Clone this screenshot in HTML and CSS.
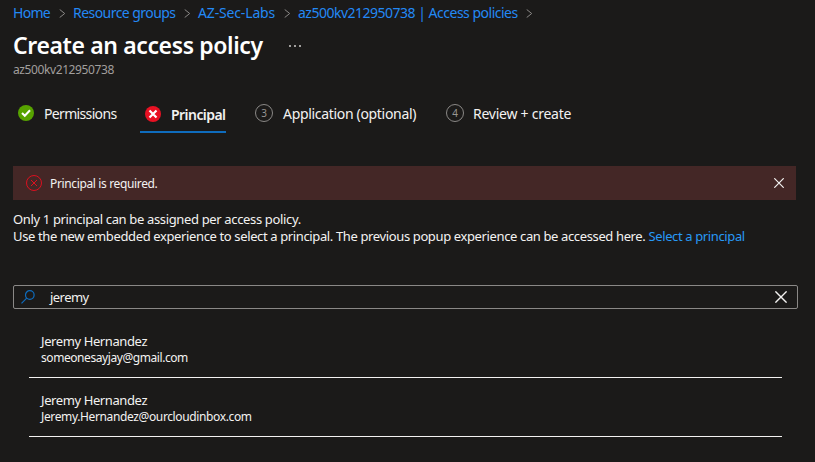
FILE: index.html
```html
<!DOCTYPE html>
<html lang="en">
<head>
<meta charset="utf-8">
<title>Create an access policy</title>
<link rel="stylesheet" href="styles.css">
</head>
<body>
<nav class="breadcrumb">
  <a class="crumb-home">Home</a><svg class="chev" viewBox="0 0 7 9"><path d="M.7.5 5.7 4.5.7 8.5"/></svg>
  <a class="crumb-groups">Resource groups</a><svg class="chev" viewBox="0 0 7 9"><path d="M.7.5 5.7 4.5.7 8.5"/></svg>
  <a class="crumb-lab">AZ-Sec-Labs</a><svg class="chev" viewBox="0 0 7 9"><path d="M.7.5 5.7 4.5.7 8.5"/></svg>
  <a class="crumb-vault">az500kv212950738 | Access policies</a><svg class="chev" viewBox="0 0 7 9"><path d="M.7.5 5.7 4.5.7 8.5"/></svg>
</nav>
<header class="header">
  <div class="title-row">
    <h1>Create an access policy</h1>
    <svg class="more" viewBox="0 0 12 2"><path d="M0 0h2v2H0zM5 0h2v2H5zM10 0h2v2h-2z"/></svg>
  </div>
  <p class="subtitle">az500kv212950738</p>
</header>
<div class="tabs">
  <div class="tab tab-permissions">
    <svg class="status" viewBox="0 0 16 16"><circle cx="8" cy="8" r="8" fill="#57a300"/><path d="m4 8 2.8 2.8L12 5.3" fill="none" stroke="#fff" stroke-width="2"/></svg>
    <span>Permissions</span>
  </div>
  <div class="tab tab-principal">
    <svg class="status" viewBox="0 0 16 16"><circle cx="8" cy="8" r="8" fill="#e81123"/><path d="m4.5 4.5 7 7m0-7-7 7" fill="none" stroke="#fff" stroke-width="2.2"/></svg>
    <span>Principal</span>
  </div>
  <div class="tab tab-application"><span class="step">3</span><span>Application (optional)</span></div>
  <div class="tab tab-review"><span class="step">4</span><span>Review + create</span></div>
</div>
<main>
  <div class="alert">
    <svg class="alert-icon" viewBox="0 0 16 16"><circle cx="8" cy="8" r="7.5"/><path d="m5 5 6 6m0-6-6 6"/></svg>
    <span class="alert-text">Principal is required.</span>
    <svg class="dismiss" viewBox="0 0 10 10"><path d="m.3.3 9.4 9.4m0-9.4L.3 9.7"/></svg>
  </div>
  <div class="info">
    <p class="info-first">Only 1 principal can be assigned per access policy.</p>
    <p class="info-second">Use the new embedded experience to select a principal. The previous popup experience can be accessed here. <a>Select a principal</a></p>
  </div>
  <div class="search">
    <svg class="search-icon" viewBox="0 0 14 14"><circle cx="8.8" cy="5" r="4.3"/><path d="M5.7 8.1.5 13.3"/></svg>
    <span class="query">jeremy</span>
    <svg class="clear" viewBox="0 0 12 12"><path d="m.4.4 11.2 11.2m0-11.2L.4 11.6"/></svg>
  </div>
  <ul class="results">
    <li><span class="name">Jeremy Hernandez</span><span class="mail mail-first">someonesayjay@gmail.com</span></li>
    <li><span class="name">Jeremy Hernandez</span><span class="mail mail-second">Jeremy.Hernandez@ourcloudinbox.com</span></li>
  </ul>
</main>
</body>
</html>
```
FILE: styles.css
```css
* { box-sizing: border-box; }
body {
  margin: 0;
  height: 462px;
  padding-left: 13px;
  overflow: hidden;
  background: #1b1a19;
  color: #f3f2f1;
  font: 13px/17px "Segoe UI", "Noto Sans", sans-serif;
  white-space: nowrap;
}
h1, p, ul { margin: 0; padding: 0; }
svg { flex: none; display: block; }
a { color: #2899f5; }

.breadcrumb { display: flex; align-items: center; height: 25px; }
.breadcrumb a { color: #2389f5; font-size: 14px; line-height: 25px; }
.crumb-home { width: 46px; letter-spacing: -.7px; }
.crumb-groups { width: 111px; letter-spacing: -.55px; }
.crumb-lab { width: 86px; letter-spacing: -.15px; }
.crumb-vault { width: 228px; letter-spacing: -.5px; }
.chev { width: 7px; height: 9px; margin: 1px 7px 0 0; fill: none; stroke: #8a8886; }

.header { height: 75px; }
.title-row { display: flex; height: 37px; }
h1 { width: 276px; color: #fff; font-size: 23px; line-height: 41px; font-weight: 600; letter-spacing: -.38px; }
.more { width: 12px; height: 2px; margin-top: 20px; fill: #a19f9d; }
.subtitle { color: #a19f9d; font-size: 12px; line-height: 16px; letter-spacing: -.4px; }

.tabs { display: flex; height: 33px; font-size: 14px; }
.tab { display: flex; height: 33px; line-height: 28px; }
.status { width: 16px; height: 16px; }
.tab-permissions { width: 127px; padding-left: 5px; letter-spacing: -.66px; }
.tab-permissions .status { margin: 5px 10px 0 0; }
.tab-principal { width: 86px; padding-left: 5px; border-bottom: 2px solid #0f6cbd; font-weight: 600; line-height: 30px; letter-spacing: -.55px; }
.tab-principal .status { margin: 6px 10px 0 0; }
.tab-application { width: 191px; margin-left: 29px; letter-spacing: -.32px; }
.tab-review { letter-spacing: -.25px; }
.step { width: 18px; height: 18px; margin: 4px 10px 0 0; border: 1px solid #8a8886; border-radius: 50%; color: #979593; font-size: 10px; line-height: 16px; text-align: center; letter-spacing: 0; }
.tab-review .step { margin-right: 9px; }

.alert { display: flex; width: 783px; height: 34px; margin-top: 33px; padding: 0 12px 0 13px; align-items: center; background: #442726; }
.alert-icon { width: 16px; height: 16px; fill: none; stroke: #dc1020; }
.alert-text { margin-left: 8px; font-size: 12px; letter-spacing: -.36px; }
.dismiss { width: 10px; height: 10px; margin-left: auto; stroke: #f3f2f1; stroke-width: 1.2; }

.info { height: 85px; padding-top: 11px; }
.info-first { letter-spacing: -.35px; }
.info-second { letter-spacing: -.372px; }

.search { display: flex; width: 785px; height: 24px; padding: 0 10px 0 8px; align-items: center; border: 1px solid #8a8886; border-radius: 2px; }
.search-icon { width: 14px; height: 14px; margin-left: -1px; fill: none; stroke: #0f6cbd; stroke-width: 1.2; }
.query { margin-left: 15px; letter-spacing: -.55px; }
.clear { width: 12px; height: 12px; margin-left: auto; stroke: #f3f2f1; stroke-width: 1.4; }

.results { width: 753px; margin: 10px 0 0 16px; list-style: none; }
.results li { display: flex; flex-direction: column; height: 59px; padding: 14px 12px 0; border-bottom: 1px solid #f3f2f1; }
.name { height: 16px; letter-spacing: -.4px; }
.mail { font-size: 12px; line-height: 17px; }
.mail-first { letter-spacing: -.43px; }
.mail-second { letter-spacing: -.37px; }
```
